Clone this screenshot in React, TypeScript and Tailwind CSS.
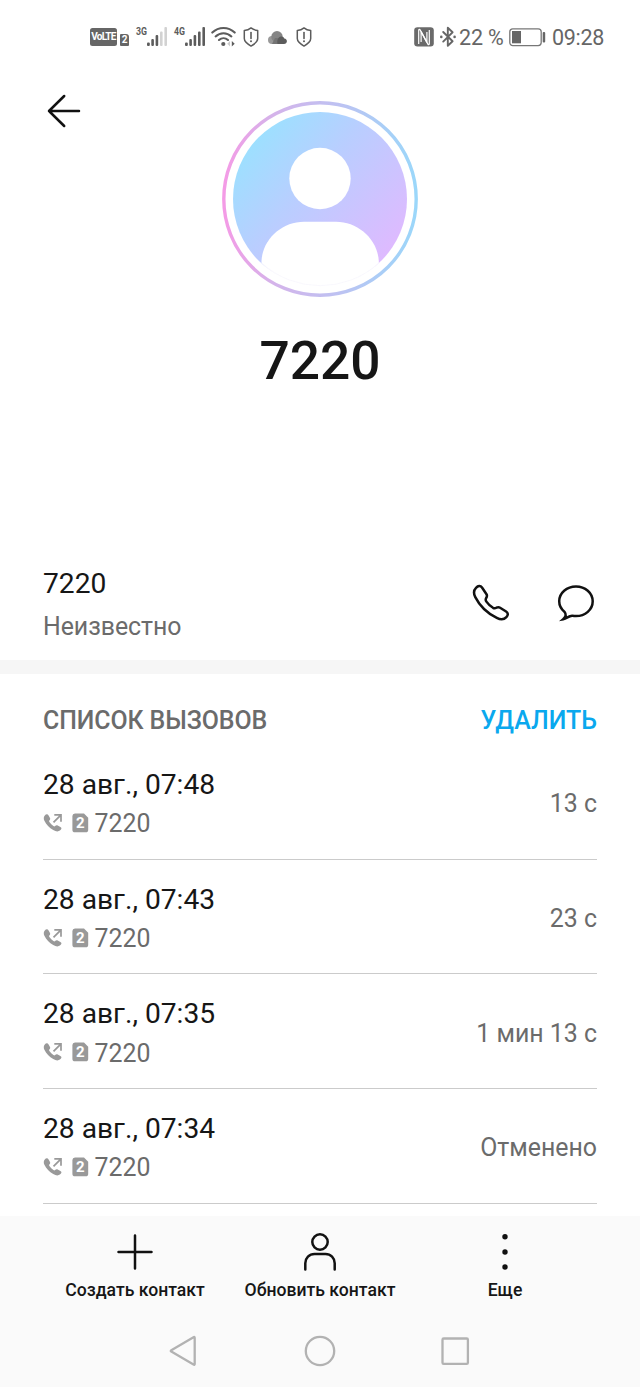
type Call = { date: string; duration: string };

const calls: Call[] = [
  { date: "28 авг., 07:48", duration: "13 с" },
  { date: "28 авг., 07:43", duration: "23 с" },
  { date: "28 авг., 07:35", duration: "1 мин 13 с" },
  { date: "28 авг., 07:34", duration: "Отменено" },
];

const VolteIcon = () => (
  <div className="flex items-end gap-[3px] w-[40px] pl-px font-bold text-white">
    <span className="w-[27px] h-[18px] rounded-[2.500px] bg-[#666] flex items-center justify-center text-[10px] leading-[12px] tracking-[-0.700px]">
      VoLTE
    </span>
    <span className="w-[9px] h-[12px] rounded-[1px] rounded-tr-[3px] bg-[#666] flex items-center justify-center text-[10px] leading-[10px]">
      2
    </span>
  </div>
);

const SignalIcon = ({ label, full }: { label: string; full?: boolean }) => (
  <svg className="w-[32px] h-[22px] overflow-visible" viewBox="0 0 32 22" fill="#5c5c5c">
    <text x="0" y="9" textLength="11" lengthAdjust="spacingAndGlyphs" fontSize="11" fontWeight="700">
      {label}
    </text>
    <rect x="11" y="16.500" width="2.800" height="3.500" rx="1" />
    <rect x="15.300" y="13" width="2.600" height="7" rx="1" />
    <rect x="19.600" y="9" width="2.600" height="11" rx="1" />
    <rect x="24" y="5.500" width="2.600" height="14.500" rx="1" fill={full ? "#5c5c5c" : "#d2d2d2"} />
    <rect x="28.400" y="1" width="2.600" height="19" rx="1" fill={full ? "#5c5c5c" : "#d2d2d2"} />
  </svg>
);

const WifiIcon = () => (
  <svg className="w-[25px] h-[22px]" viewBox="0 0 25 22" fill="none" stroke="#5c5c5c" strokeWidth="2.100" strokeLinecap="round">
    <path d="M1.300 6.600C7.700.5 17.300.5 23.700 6.600" />
    <path d="M4.600 10.400c4.600-4.300 11.200-4.300 15.800 0" />
    <path d="M8 14c2.600-2.300 6.400-2.300 9 0" />
    <circle cx="12.300" cy="18" r="2.100" fill="#5c5c5c" stroke="none" />
    <path d="M19 15v5.400l-2.800-2.700z" fill="#ccc" stroke="none" />
    <path d="M20.800 15v5.400l2.900-2.700z" fill="#5c5c5c" stroke="none" />
  </svg>
);

const ShieldIcon = () => (
  <svg className="w-[16px] h-[22px]" viewBox="0 0 16 22" fill="none" stroke="#5c5c5c" strokeWidth="1.500" strokeLinecap="round" strokeLinejoin="round">
    <path d="M8 1.900c2 1.600 4.300 2.400 6.700 2.700v8c0 3.400-3.200 5.500-6.700 7.500-3.500-2-6.700-4.100-6.700-7.500v-8C3.700 4.300 6 3.500 8 1.900z" />
    <path d="M8 6.500v6" strokeWidth="1.600" />
    <circle cx="8" cy="15.200" r="1" fill="#5c5c5c" stroke="none" />
  </svg>
);

const CloudIcon = () => (
  <svg className="w-[19px] h-[22px]" viewBox="0 0 19 22">
    <circle cx="4" cy="14" r="4" fill="#999" />
    <circle cx="9" cy="10.800" r="5.700" fill="#858585" />
    <path d="M4 18h11l-3-6H7z" fill="#747474" />
    <path d="M9.500 18c-1-5 1.500-7.500 4-7.500 1.500 0 2.400.8 2.800 2 1.700.2 2.600 1.400 2.600 2.800 0 1.500-1.300 2.700-2.900 2.700z" fill="#5c5c5c" />
  </svg>
);

const NfcIcon = () => (
  <svg className="w-[20px] h-[22px]" viewBox="0 0 20 22">
    <rect x=".2" y="1.200" width="19.600" height="19.400" rx="3.300" fill="#6a6a6a" />
    <path d="M4.700 18V4.200c0-1 .9-1.200 1.400-.3l6.800 12.500V6" fill="none" stroke="#fff" strokeWidth="1.200" />
    <path d="M15.300 4v13.800c0 1-.9 1.200-1.400.3L7.100 5.600V16" fill="none" stroke="#fff" strokeWidth="1.200" />
  </svg>
);

const BluetoothIcon = () => (
  <svg className="w-[18px] h-[22px]" viewBox="0 0 18 22" fill="none" stroke="#666" strokeWidth="1.900" strokeLinejoin="round" strokeLinecap="round">
    <path d="M4.200 6l9.400 9.300-4.800 4.500V1.800l4.800 4.500L4.200 15.600" />
    <circle cx="2.300" cy="10.900" r="1.300" fill="#666" stroke="none" />
    <circle cx="15.600" cy="10.900" r="1.300" fill="#666" stroke="none" />
  </svg>
);

const BatteryIcon = () => (
  <svg className="w-[37px] h-[22px]" viewBox="0 0 37 22">
    <rect x=".8" y="2.800" width="31.400" height="16.800" rx="3" fill="none" stroke="#777" strokeWidth="1.300" />
    <rect x="3" y="5" width="9" height="12.300" fill="#666" />
    <rect x="33.700" y="6" width="2.500" height="10.500" rx="1" fill="#666" />
  </svg>
);

const Avatar = () => (
  <svg className="w-[198px] h-[198px] shrink-0" viewBox="0 0 198 198">
    <defs>
      <linearGradient id="ring" x1="0" y1="0" x2="1" y2="0">
        <stop offset="0" stopColor="#f49be6" />
        <stop offset=".25" stopColor="#d5b3ea" />
        <stop offset=".6" stopColor="#bdc2f2" />
        <stop offset="1" stopColor="#9bd7fa" />
      </linearGradient>
      <linearGradient id="fill" x1=".1" y1=".15" x2=".9" y2=".85">
        <stop offset="0" stopColor="#9be1ff" />
        <stop offset=".4" stopColor="#b9ceff" />
        <stop offset="1" stopColor="#e0b9ff" />
      </linearGradient>
    </defs>
    <circle cx="99" cy="99" r="96.200" fill="none" stroke="url(#ring)" strokeWidth="3.400" />
    <circle cx="99" cy="99" r="87" fill="url(#fill)" />
    <circle cx="99" cy="78.500" r="30.700" fill="#fff" />
    <path d="M40.500 163v-2C41.500 139 61 121.700 83 121.700h32c22 0 41.500 17.300 42.800 39.300v2C143 178 123 186.700 99 186.700S55 178 40.500 163z" fill="#fff" />
    <path d="M41 163.300A87 87 0 0 0 157.500 163.300" fill="none" stroke="#f7f6fd" strokeWidth=".8" />
  </svg>
);

const OutgoingIcon = () => (
  <svg className="w-[20px] h-[20px] mt-[-2px]" viewBox="0 0 20 20">
    <path d="M1.600 2.700C3.100.9 4.700.9 5.600 2.500L7 5c.5 1.100.1 1.700-.7 2.600-.4.500-.2 1 .3 1.700 1 1.500 2.200 2.700 3.800 3.700.7.500 1.200.5 1.700.1.900-.8 1.600-1.100 2.600-.5l2.700 1.500c1.600.9 1.400 2.200-.5 3.500-1.600 1.200-4 1.100-6.700-.5C6.400 14.900 3.200 11.600 1.400 7.800.5 5.800.6 4 1.600 2.700z" fill="#999" />
    <path d="M10.500 9.300L18 1.900M11.300 1.900H18v6.800" fill="none" stroke="#999" strokeWidth="1.700" />
  </svg>
);

const SimIcon = () => (
  <svg className="w-[17px] h-[20px]" viewBox="0 0 17 20">
    <path d="M3 .5h9l4.200 4.200v12A2.600 2.600 0 0 1 13.600 19.300H3A2.600 2.600 0 0 1 .4 16.700V3A2.600 2.600 0 0 1 3 .5z" fill="#999" />
    <text x="8.200" y="15.400" textAnchor="middle" fontSize="15" fontWeight="700" fill="#fff">2</text>
  </svg>
);

const CallRow = ({ date, duration }: Call) => (
  <div className="h-[114.670px] pt-5 border-b border-[#cbcbcb] flex items-start justify-between">
    <div>
      <div className="text-[28.200px] leading-[39px] text-[#161616]">{date}</div>
      <div className="flex items-center h-[40px] text-[24.900px] text-[#6b6b6b]">
        <OutgoingIcon />
        <span className="ml-[8.500px] mr-[6px] mt-[-2px]"><SimIcon /></span>
        7220
      </div>
    </div>
    <div className="h-[78px] flex items-center text-[24.900px] text-[#6b6b6b]">{duration}</div>
  </div>
);

const App = () => {
  return (
    <div className="w-[640px] h-[1387px] bg-white flex flex-col overflow-hidden font-[Roboto,sans-serif] text-[#161616]">
      <div className="h-[74px] shrink-0 flex items-center pl-[89px] pr-9 text-[21.500px] text-[#666]">
        <VolteIcon />
        <span className="ml-[7px]"><SignalIcon label="3G" /></span>
        <span className="ml-[6px]"><SignalIcon label="4G" full /></span>
        <span className="ml-[5px]"><WifiIcon /></span>
        <span className="ml-[7px]"><ShieldIcon /></span>
        <span className="ml-[9px]"><CloudIcon /></span>
        <span className="ml-[9px]"><ShieldIcon /></span>
        <div className="ml-auto flex items-center whitespace-nowrap">
          <NfcIcon />
          <span className="ml-[5px]"><BluetoothIcon /></span>
          <span className="ml-[2px] mt-[2px] w-[50px] tracking-[-0.200px]">22 %</span>
          <BatteryIcon />
          <span className="ml-[6px] mt-[2px] w-[52px] tracking-[-0.300px]">09:28</span>
        </div>
      </div>

      <div className="h-[466px] shrink-0 pt-[26px]">
        <div className="grid grid-cols-3 px-[46px]">
          <svg className="w-9 h-9 mt-[-7px]" viewBox="0 0 36 36" fill="none" stroke="#111" strokeWidth="2.500" strokeLinecap="round" strokeLinejoin="round">
            <path d="M33 18H3M18.200 3L3 18l15.200 15" />
          </svg>
          <div className="flex justify-center"><Avatar /></div>
        </div>
        <h1 className="mt-[31px] text-center text-[53.300px] leading-[64px] font-medium">7220</h1>
      </div>

      <div className="h-[120px] shrink-0 pl-[43px] pr-[45px] flex items-start justify-between">
        <div className="pt-[22px]">
          <div className="text-[28.200px] leading-[43px]">7220</div>
          <div className="text-[24.900px] leading-[43px] tracking-[-0.050px] text-[#6b6b6b]">Неизвестно</div>
        </div>
        <div className="flex gap-12 pt-[44px]">
          <svg className="w-[38px] h-[38px]" viewBox="0 0 38 38" fill="none" stroke="#111" strokeWidth="2.500" strokeLinejoin="round">
            <path d="M5 3.800C7 1.800 9.400 1.300 11 3.500l4.500 6.800c.9 1.400.4 2.600-.3 3.700-.8 1.300-.7 2.300.2 3.600 1.900 2.700 4 4.600 6.600 6.200 1.300.7 2.400.5 3.400-.1 1.300-.7 2.400-.8 3.700 0l6 3.800c2.200 1.500 2.200 3.700.3 5.700-2.600 2.700-5.800 2.700-9.600.7C15.800 29 8.700 21.800 4.300 13.100 2.500 9.500 2.400 6.400 5 3.800z" />
          </svg>
          <svg className="w-[38px] h-[38px]" viewBox="0 0 38 38" fill="none" stroke="#111" strokeWidth="2.500">
            <path d="M6.200 35.200C9.200 32.500 9.100 29.900 7.600 28 4 25 2.200 21.600 2.200 17.300 2.200 8.900 9.800 2.400 19 2.400s16.700 6.500 16.700 14.900S28.200 32.100 19 32.100c-2-.1-3.400-.7-5.300-.1-2.500.7-4.500 2.600-7.500 3.200z" />
          </svg>
        </div>
      </div>

      <div className="h-[14px] shrink-0 bg-[#f6f6f6]" />

      <div className="h-[542px] shrink-0 px-[43px] overflow-hidden">
        <div className="h-[71px] pt-[27px] flex justify-between text-[24.900px] leading-[40px] font-medium">
          <span className="tracking-[-0.080px] text-[#6b6b6b]">СПИСОК ВЫЗОВОВ</span>
          <span className="text-[25px] text-[#0aa8ee]">УДАЛИТЬ</span>
        </div>
        {calls.map((call) => (
          <CallRow key={call.date} {...call} />
        ))}
      </div>

      <div className="flex-1 bg-[#fafafa]">
        <div className="grid grid-cols-3 px-[42.500px] pt-4 text-[17.600px] leading-[24px] font-medium whitespace-nowrap">
          <div className="flex flex-col items-center">
            <svg className="w-10 h-10" viewBox="0 0 40 40" stroke="#111" strokeWidth="2.500" strokeLinecap="round">
              <path d="M20 3.500v33M3.500 20h33" />
            </svg>
            <span className="mt-[6px]">Создать контакт</span>
          </div>
          <div className="flex flex-col items-center">
            <svg className="w-10 h-10" viewBox="0 0 40 40" fill="none" stroke="#111" strokeWidth="2.500" strokeLinecap="round">
              <circle cx="20" cy="10" r="7.700" />
              <path d="M5.300 37.400v-6.200c0-5.200 4-9.300 9.200-9.300h11c5.200 0 9.200 4.100 9.200 9.300v6.200" />
            </svg>
            <span className="mt-[6px]">Обновить контакт</span>
          </div>
          <div className="flex flex-col items-center">
            <svg className="w-10 h-10" viewBox="0 0 40 40" fill="#111">
              <circle cx="20" cy="4.700" r="2.700" />
              <circle cx="20" cy="20" r="2.700" />
              <circle cx="20" cy="35" r="2.700" />
            </svg>
            <span className="mt-[6px]">Еще</span>
          </div>
        </div>
        <div className="mt-[33px] flex justify-center gap-[103.500px]">
          <svg className="w-8 h-8" viewBox="0 0 32 32" fill="none" stroke="#b2b2b2" strokeWidth="2.300" strokeLinejoin="round">
            <path d="M2.300 15.200L24.500 2.200c.7-.4 1.200-.1 1.200.7v26c0 .8-.5 1.100-1.200.7L2.300 16.600c-.7-.4-.7-1 0-1.400z" />
          </svg>
          <svg className="w-8 h-8" viewBox="0 0 32 32" fill="none" stroke="#b2b2b2" strokeWidth="2.300">
            <circle cx="16" cy="16" r="14.200" />
          </svg>
          <svg className="w-8 h-8" viewBox="0 0 32 32" fill="none" stroke="#b2b2b2" strokeWidth="2.300">
            <rect x="2.500" y="3.500" width="25.400" height="25.400" rx="1.200" />
          </svg>
        </div>
      </div>
    </div>
  );
};

export default App;
